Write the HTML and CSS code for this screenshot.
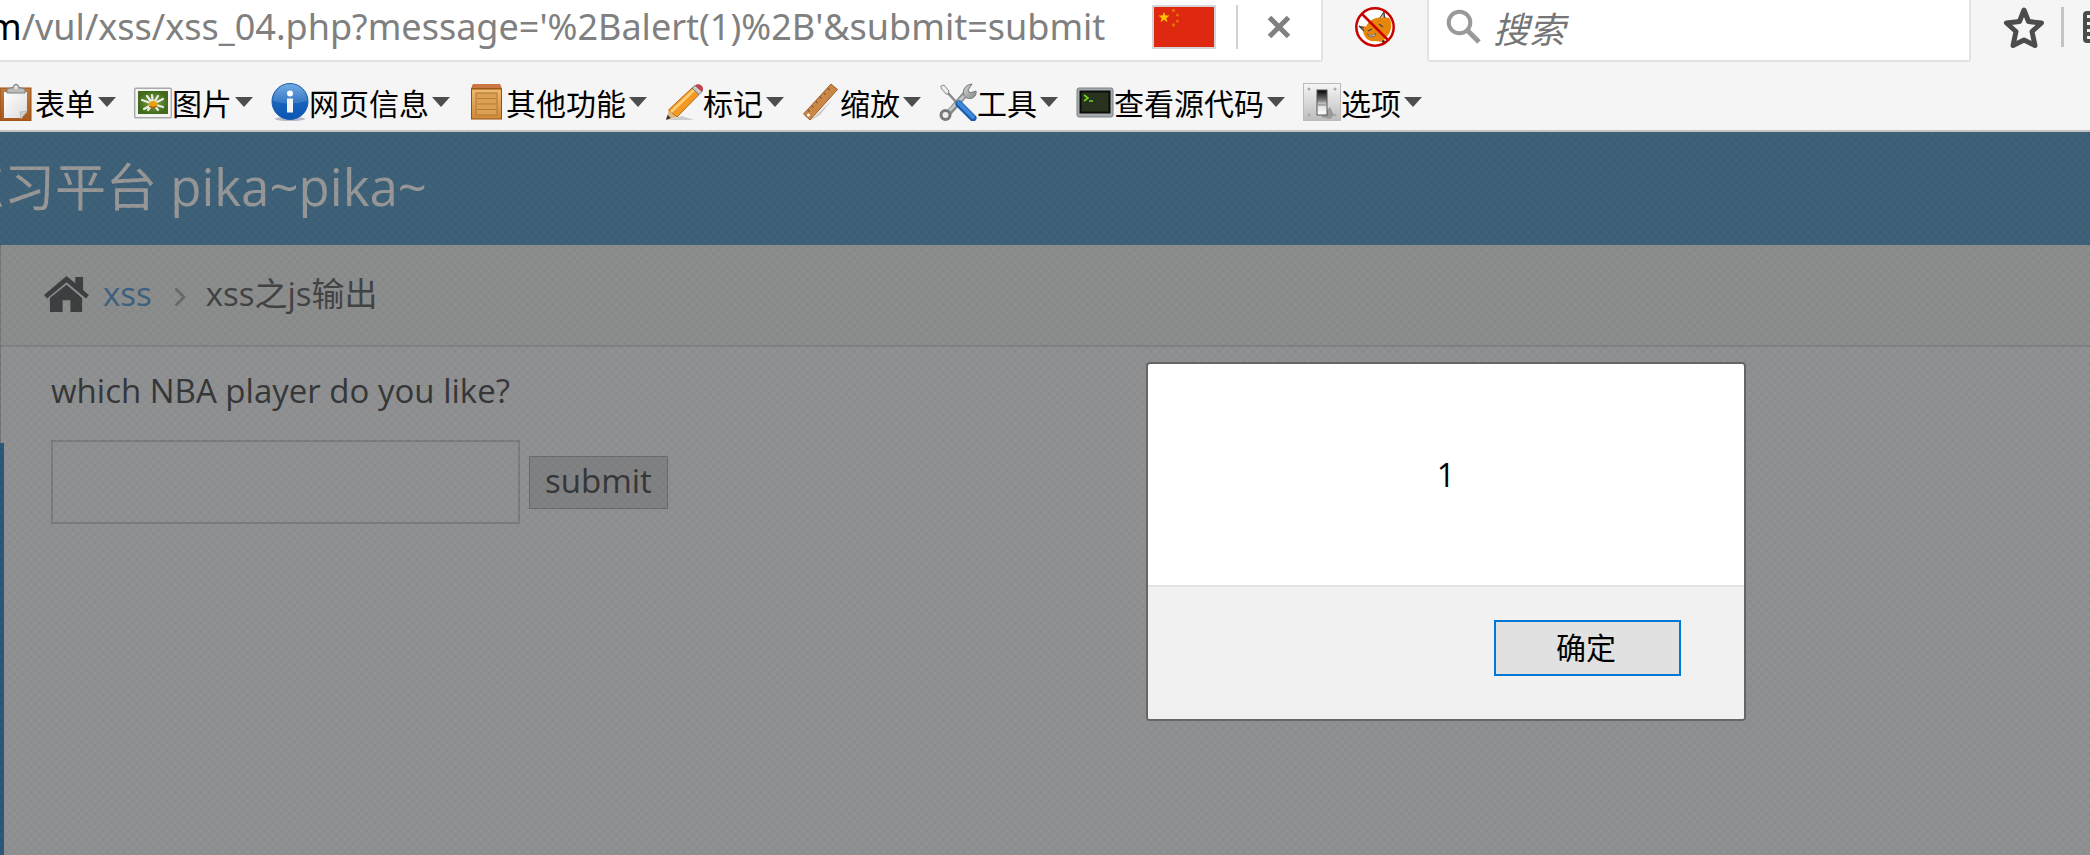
FILE: index.html
```html
<!DOCTYPE html>
<html lang="zh-CN">
<head>
<meta charset="utf-8">
<title>xss之js输出</title>
<link rel="stylesheet" href="styles.css">
</head>
<body>
<svg class="defs" width="0" height="0" aria-hidden="true">
  <defs>
    <linearGradient id="wood" x1="0" y1="0" x2="0" y2="1"><stop offset="0" stop-color="#c07a3c"/><stop offset="1" stop-color="#a8581c"/></linearGradient>
    <linearGradient id="crate" x1="0" y1="0" x2="0" y2="1"><stop offset="0" stop-color="#eebb70"/><stop offset="1" stop-color="#cf8836"/></linearGradient>
    <linearGradient id="paper" x1="0" y1="0" x2="1" y2="1"><stop offset="0" stop-color="#fff"/><stop offset="1" stop-color="#dcdcdc"/></linearGradient>
    <linearGradient id="blue" x1="0" y1="0" x2="0" y2="1"><stop offset="0" stop-color="#5a9fe0"/><stop offset=".5" stop-color="#1763bd"/><stop offset="1" stop-color="#0b56b4"/></linearGradient>
    <linearGradient id="plate" x1="0" y1="0" x2="0" y2="1"><stop offset="0" stop-color="#f6f6f6"/><stop offset="1" stop-color="#bcbcbc"/></linearGradient>
    <linearGradient id="steel" x1="0" y1="0" x2="1" y2="1"><stop offset="0" stop-color="#d5d8d8"/><stop offset="1" stop-color="#85898b"/></linearGradient>
    <linearGradient id="switch" x1="0" y1="0" x2="0" y2="1"><stop offset="0" stop-color="#000"/><stop offset=".4" stop-color="#777"/><stop offset=".6" stop-color="#ddd"/><stop offset="1" stop-color="#fff"/></linearGradient>
    <radialGradient id="leaf"><stop offset="0" stop-color="#7fa63e"/><stop offset="1" stop-color="#416a1c"/></radialGradient>
  </defs>
</svg>

<header class="nav">
  <div class="url">
    <span class="address"><b>m</b>/vul/xss/xss_04.php?message='%2Balert(1)%2B'&amp;submit=submit</span>
    <svg class="flag" viewBox="0 0 64 44" role="img" aria-label="China">
      <path fill="#d5d5d8" d="M0 0h64v44H0z"/><path fill="#de2910" d="M2 2h60v40H2z"/>
      <path fill="#ffc400" d="M12 7l1.500 3.600h4l-3.200 2.600 1.200 4-3.500-2.400-3.500 2.400 1.200-4-3.200-2.600h4z"/>
      <g fill="#e8680c"><circle cx="21.500" cy="5.500" r="1.800"/><circle cx="25.500" cy="10" r="1.600"/><circle cx="25.500" cy="16" r="1.600"/><circle cx="21.500" cy="20" r="1.800"/></g>
    </svg>
    <span class="rule"></span>
    <button class="stop" aria-label="停止"><svg viewBox="0 0 24 24"><path d="M2.500 2.500l19 19M21.500 2.500l-19 19" stroke="#808080" stroke-width="5"/></svg></button>
  </div>
  <button class="addon" aria-label="FoxyProxy">
    <svg viewBox="0 0 40 40">
      <circle cx="20" cy="20" r="18.500" fill="#fff"/>
      <path d="M8 22L4 19l7 .5C14 13 22 9 27 11l2-6 .8 6C35 9 37 14 36 21c-1 7-5 8-8 14l-8-1c-7 1-12-4-12-12z" fill="#e8860c"/>
      <path d="M25 11l4-6 .8 6M9 21l-5-2 5 5M13 24l4-2M24 17l4 3" fill="none" stroke="#444" stroke-width="1.200"/>
      <path d="M12 27c3 2 6 2 9-1l-1 3-5 1z" fill="#fff" stroke="#555" stroke-width=".8"/>
      <circle cx="28.500" cy="34.500" r="1.500" fill="#333"/>
      <circle cx="20" cy="20" r="18.700" fill="none" stroke="#c80000" stroke-width="2.500"/>
      <path d="M7 7l26 26" stroke="#c80000" stroke-width="2.500"/>
    </svg>
  </button>
  <label class="search">
    <svg viewBox="0 0 36 36"><circle cx="13.500" cy="13.500" r="10.800" fill="none" stroke="#999" stroke-width="4"/><path d="M21 21l12 12" stroke="#999" stroke-width="5"/></svg>
    <input type="text" placeholder="搜索" aria-label="搜索">
  </label>
  <div class="tools">
    <button class="star" aria-label="收藏"><svg viewBox="0 0 42 42"><path d="M21 4l4.500 11.500 13 1.500L29 25.500l3 14L21 34l-11 5.500 3-14L3.500 17l13-1.500z" fill="none" stroke="#4c4c4c" stroke-width="5" stroke-linejoin="round"/></svg></button>
    <span class="rule dark"></span>
    <button class="lib" aria-label="书签"><svg viewBox="0 0 36 32"><rect x="2" y="2" width="32" height="28" rx="2" fill="none" stroke="#4c4c4c" stroke-width="4"/><path d="M4 9h14M4 16h14M4 23h14" stroke="#4c4c4c" stroke-width="4"/></svg></button>
  </div>
</header>

<nav class="devbar">
  <button><svg viewBox="0 0 38 38"><rect x="3" y="5" width="31" height="33" fill="url(#wood)" stroke="#96501c"/><path d="M7 9h23v20l-6 6H7z" fill="url(#paper)"/><path d="M30 28l-7 1 1 7z" fill="#ccc" stroke="#aaa" stroke-width=".6"/><path d="M10 10V6l4-1h2c0-5 6-5 6 0h2l4 1v4z" fill="#bcbcbc" stroke="#7f7f7f"/><circle cx="19" cy="4.500" r="1.500" fill="#eee"/></svg>表单<i></i></button>
  <button><svg viewBox="0 0 38 38"><rect x=".7" y="5.200" width="36.600" height="29.600" rx="1" fill="#f4f4f4" stroke="#aaa" stroke-width="1.400"/><rect x="4" y="8" width="30" height="23" fill="url(#leaf)"/><g stroke="#e9ece6" stroke-width="2.200" stroke-linecap="round"><path d="M19 21L8 17M19 21l-9 5M19 21l-6-8M19 21l-1-9M19 21l5-8M19 21l10-5M19 21l10 3M19 21l5 6M19 21l-5 6"/></g><ellipse cx="19" cy="21.500" rx="4.500" ry="3.500" fill="#e7a20e"/><path d="M15.500 23q3 3 7 0" fill="none" stroke="#a85b06" stroke-width="1.500"/></svg>图片<i></i></button>
  <button><svg viewBox="0 0 38 38"><ellipse cx="19" cy="36" rx="15" ry="2" fill="#b5bcc8"/><circle cx="19" cy="18.500" r="18" fill="url(#blue)" stroke="#1c5fae"/><path d="M2 18a17 17 0 0 1 34 0Q19 23 2 18z" fill="#fff" opacity=".15"/><circle cx="19" cy="10.500" r="3" fill="#fff"/><path d="M16 15.500h6v14h-6z" fill="#f1f3f7"/></svg>网页信息<i></i></button>
  <button><svg viewBox="0 0 38 38"><path d="M5 1h27l2 5v30H3V6z" fill="#a76025"/><path d="M5 1h27l1 4H4z" fill="#c97843"/><rect x="3.500" y="6" width="30" height="30" fill="url(#crate)" stroke="#945014"/><rect x="8" y="10" width="21" height="22" fill="#daa054" stroke="#b47430"/><path d="M9 15.500h19M9 21h19M9 26.500h19" stroke="#bd7a35"/></svg>其他功能<i></i></button>
  <button><svg viewBox="0 0 38 38"><path d="M3 37h26l-12-4z" fill="#ccc"/><path d="M1 37l3-10 8 7z" fill="#dfb985"/><path d="M1 37l1.500-5 3.500 3z" fill="#333"/><path d="M3.500 27L27 5l7 6.500L12 34z" fill="#f29a25" stroke="#b96a10"/><path d="M6 29L29 7" stroke="#ffd079" stroke-width="2.500"/><path d="M27 5l3-2.500 7 6-3 3z" fill="#ccc" stroke="#777"/><path d="M30 2.500c4-4 11 2 7 6.500z" fill="#c4444c"/></svg>标记<i></i></button>
  <button><svg viewBox="0 0 38 38"><path d="M8 38l22-21-12 15z" fill="#ccc"/><path d="M1.500 31L29 1l6.500 5.500L8 37z" fill="#cb8748" stroke="#9a5d2a"/><path d="M6 27l1.500 1.500M10 23l1.500 1.500M14 18.500l1.500 1.500M18 14l1.500 1.500M22 10l1.500 1.500M26 5.500l1.500 1.500" stroke="#8a5023" stroke-width="1.200"/><circle cx="6.500" cy="32" r="1.500" fill="#fff"/></svg>缩放<i></i></button>
  <button><svg viewBox="0 0 38 38"><path d="M7 33L29 8" stroke="#858a8c" stroke-width="6"/><path d="M7 31L29 9" stroke="#c2c6c7" stroke-width="3"/><circle cx="6.500" cy="32" r="4.500" fill="#eee" stroke="#767a7c" stroke-width="3"/><path d="M33 1l-4 6 2 3 6-2c1 6-5 9-9 7-6-2-5-13 5-14z" fill="url(#steel)" stroke="#777"/><path d="M8 9l11 12" stroke="#858a8c" stroke-width="2.500"/><path d="M2 3l3-1 5 6-1 3-2 0-5-6z" fill="#eee" stroke="#888"/><path d="M20 21l14 14" stroke="#1d57a5" stroke-width="7" stroke-linecap="round"/><path d="M20 20l14 14" stroke="#3d88dc" stroke-width="4" stroke-linecap="round"/></svg>工具<i></i></button>
  <button><svg viewBox="0 0 38 38"><rect x="1" y="5" width="36" height="29" rx="2" fill="#a6abb0" stroke="#7c8186"/><rect x="4.500" y="8.500" width="29" height="21" fill="#28321f" stroke="#090c08" stroke-width="2"/><path d="M8 12l4 3-4 3M13 18h4" fill="none" stroke="#74d51d" stroke-width="1.600"/></svg>查看源代码<i></i></button>
  <button><svg viewBox="0 0 38 38"><rect x=".5" y=".5" width="37" height="37" fill="url(#plate)" stroke="#bbb"/><path d="M18 34l9-10 4 8-4 4z" fill="#999"/><rect x="14" y="7" width="10" height="25" fill="url(#switch)" stroke="#555"/><path d="M15 22h8" stroke="#777"/><g fill="#aaa"><circle cx="6" cy="6" r="1.500"/><circle cx="32" cy="6" r="1.500"/><circle cx="6" cy="32" r="1.500"/><circle cx="32" cy="32" r="1.500"/></g></svg>选项<i></i></button>
</nav>

<main class="page">
  <div class="brand"><span>练习平台 pika~pika~</span></div>
  <div class="body">
    <div class="side"><div class="side-active"></div></div>
    <div class="main">
      <nav class="crumbs">
        <svg class="home" viewBox="0 0 46 38"><path d="M23 0l9 7.500V1h8v13.500l6 5-3 3.500L23 6.500 3 23l-3-3.500z" fill="#3f4041"/><path d="M23 9l16 13.500V37H27V25h-8v12H6V22.500z" fill="#3f4041"/></svg>
        <a href="#">xss</a>
        <svg class="sep" viewBox="0 0 12 20"><path d="M1.500 1.500L10 10l-8.500 8.500" fill="none" stroke="#69696e" stroke-width="2.500"/></svg>
        <span>xss之js输出</span>
      </nav>
      <form class="ask">
        <label for="msg">which NBA player do you like?</label>
        <div class="row">
          <input id="msg" type="text">
          <button type="button">submit</button>
        </div>
      </form>
    </div>
  </div>
  <div class="alert" role="alertdialog" aria-labelledby="alert-text">
    <div class="alert-body" id="alert-text">1</div>
    <div class="alert-foot"><button>确定</button></div>
  </div>
</main>
</body>
</html>
```
FILE: styles.css
```css
* { box-sizing: border-box; }
body {
  margin: 0;
  min-height: 100vh;
  display: flex;
  flex-direction: column;
  overflow: hidden;
  background: #f5f5f5;
  font-family: "Open Sans", "Noto Sans CJK SC", sans-serif;
}
button { border: 0; padding: 0; background: none; font: inherit; color: inherit; }
svg { display: block; flex: none; }
.defs { position: absolute; }

.nav { display: flex; height: 62px; overflow: hidden; }
.url {
  flex: 0 0 1323px;
  display: flex;
  align-items: center;
  background: #fff;
  border: solid #e3e3e3;
  border-width: 0 2px 2px 0;
  border-radius: 0 0 3px 0;
  padding-bottom: 6px;
}
.address { flex: 0 0 1164px; margin-left: -12px; font: 36px/50px "Noto Sans", sans-serif; color: #808080; white-space: nowrap; }
.address b { font-weight: 400; color: #000; }
.flag { width: 64px; height: 44px; }
.rule { width: 2px; height: 44px; background: #d2d2d2; margin-left: 20px; }
.stop { margin-left: 29px; }
.stop svg { width: 24px; height: 24px; }
.addon { flex: 0 0 104px; display: flex; justify-content: center; padding-top: 7px; }
.addon svg { width: 40px; height: 40px; }
.search {
  flex: 1;
  display: flex;
  align-items: center;
  gap: 11px;
  padding: 0 17px 6px;
  background: #fff;
  border: solid #e3e3e3;
  border-width: 0 2px 2px;
  border-radius: 0 0 3px 3px;
}
.search svg { width: 36px; height: 36px; }
.search input { flex: 1; border: 0; outline: 0; padding: 0; background: none; font: italic 36px/48px "Noto Sans CJK SC", sans-serif; }
.search input::placeholder { color: #757575; opacity: 1; }
.tools { flex: 0 0 119px; display: flex; align-items: center; padding: 0 0 8px 32px; overflow: hidden; }
.star svg { width: 42px; height: 42px; }
.rule.dark { flex: none; width: 3px; height: 40px; background: #c4c4c4; margin: 0 19px 0 16px; }
.lib svg { width: 36px; height: 32px; }

.devbar {
  display: flex;
  gap: 18px;
  height: 70px;
  padding-top: 12px;
  border-bottom: 2px solid #c2c2c2;
  overflow: hidden;
}
.devbar button { flex: none; display: flex; align-items: center; height: 56px; font: 30px/44px "Noto Sans CJK SC", sans-serif; color: #000; }
.devbar button:first-child { margin-left: -3px; }
.devbar svg { width: 38px; height: 38px; }
.devbar i { margin-left: 3px; border: solid transparent; border-width: 10px 9px 0; border-top-color: #4d4d4d; }

.page { position: relative; flex: 1; display: flex; flex-direction: column; background: #929394; }
.page::after {
  content: "";
  position: absolute;
  inset: 0;
  pointer-events: none;
  background:
    repeating-linear-gradient(45deg, rgba(0, 0, 0, .03), transparent 3px, rgba(0, 0, 0, .03) 6px),
    repeating-linear-gradient(-45deg, rgba(0, 0, 0, .03), transparent 3px, rgba(0, 0, 0, .03) 6px);
}
.brand { display: flex; align-items: center; height: 113px; padding-bottom: 6px; background: #3f637b; color: #9a9a9a; font-size: 51px; line-height: 70px; overflow: hidden; }
.brand span { margin-left: -47px; white-space: nowrap; }
.body { flex: 1; display: flex; }
.side { flex: none; width: 1px; display: flex; background: #77787a; padding-top: 198px; }
.side-active { flex: none; width: 4px; background: #2f5979; }
.main { flex: 1; min-width: 0; }
.crumbs { display: flex; align-items: center; height: 102px; padding: 0 0 2px 43px; background: #8e8f8f; border-bottom: 2px solid #828384; font-size: 33px; line-height: 46px; color: #434446; }
.crumbs a { margin-left: 14px; color: #3e6382; text-decoration: none; }
.home { width: 45px; height: 37px; }
.sep { width: 12px; height: 20px; margin: 6px 20px 0 22px; }
.ask { padding: 21px 50px; font-size: 33px; line-height: 46px; color: #373839; }
.ask label { display: block; }
.row { display: flex; align-items: center; gap: 9px; margin-top: 26px; }
.row input { width: 469px; height: 84px; background: none; border: 2px solid #7d7e7f; font: inherit; padding: 0 12px; }
.row button { height: 53px; padding: 0 15px 2px; background: #838485; border: 1px solid #6b6c6d; }

.alert {
  position: absolute;
  z-index: 1;
  top: 230px;
  right: 344px;
  width: 600px;
  border: 2px solid #666;
  border-radius: 4px;
  background: #fff;
  color: #000;
  font: 30px/44px "Open Sans", "Noto Sans CJK SC", sans-serif;
  overflow: hidden;
}
.alert-body { padding: 89px 0 88px; text-align: center; font-size: 32px; }
.alert-foot { display: flex; justify-content: flex-end; padding: 33px 63px 43px; background: #f1f1f1; border-top: 2px solid #e3e3e3; }
.alert-foot button { width: 187px; height: 56px; padding-right: 3px; background: #e1e1e1; border: 2px solid #0078d7; }
```
